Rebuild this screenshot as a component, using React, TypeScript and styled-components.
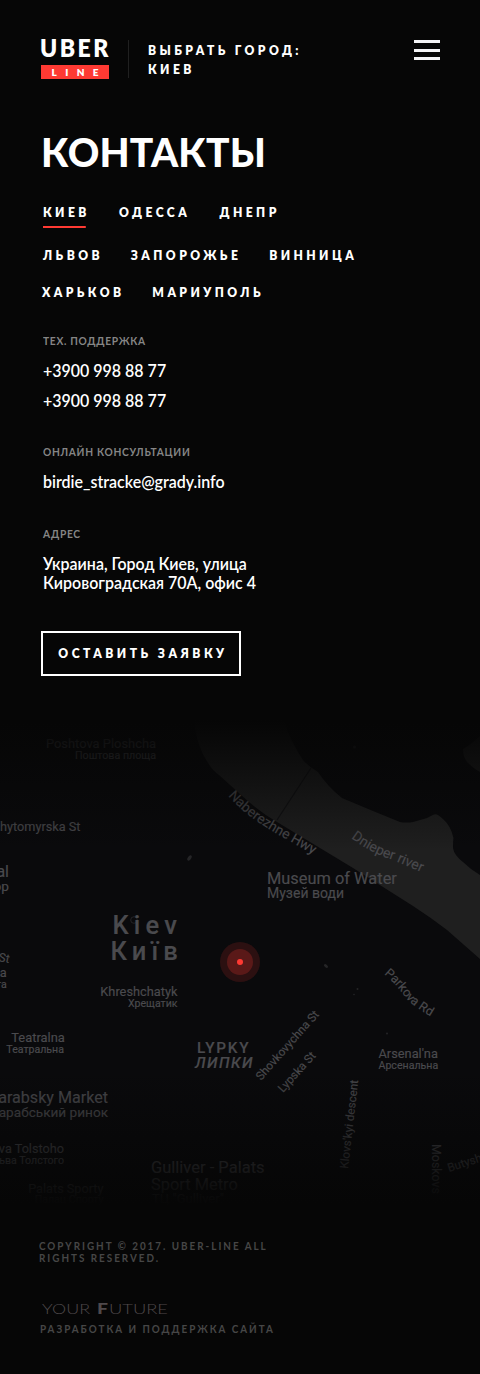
import React from 'react';
import styled, { createGlobalStyle } from 'styled-components';

const GlobalStyle = createGlobalStyle`
  *, *::before, *::after { box-sizing: border-box; }
  body {
    margin: 0;
    background: #060606;
    color: #fff;
    font-family: Lato, "Open Sans", sans-serif;
  }
  a { color: inherit; text-decoration: none; }
`;

const Page = styled.div`
  width: 480px;
  min-height: 1374px;
  background: #060606;
`;

const Header = styled.header`
  display: flex;
  align-items: flex-start;
  height: 80px;
  padding: 38px 40px 0 41px;
`;

const Logo = styled.a`
  display: block;
  width: 68px;
`;

const LogoName = styled.span`
  display: block;
  margin-left: -1px;
  height: 27px;
  font-size: 25px;
  line-height: 19px;
  font-weight: 800;
  letter-spacing: 2.7px;
  white-space: nowrap;
  transform: scaleX(0.92);
  transform-origin: left;
`;

const LogoTag = styled.span`
  display: block;
  height: 14px;
  padding-left: 10.5px;
  background: #ff3a33;
  font-size: 10px;
  line-height: 14px;
  font-weight: 800;
  letter-spacing: 8.4px;
  white-space: nowrap;
  overflow: hidden;
`;

const Divider = styled.div`
  width: 1px;
  height: 38px;
  margin: 2px 19px 0 19px;
  background: #202020;
`;

const CityPicker = styled.div`
  flex: 1;
  padding-top: 3px;
  font-size: 13px;
  line-height: 19px;
  font-weight: 800;
  letter-spacing: 3.65px;
  white-space: nowrap;
  transform: scaleX(0.93);
  transform-origin: left;
`;

const MenuButton = styled.button`
  display: flex;
  flex-direction: column;
  justify-content: space-between;
  width: 26px;
  height: 20px;
  margin: 2px 0 0;
  padding: 0;
  border: 0;
  background: none;
`;

const MenuBar = styled.span`
  height: 3px;
  background: #f4f4f6;
`;

const Content = styled.main`
  padding: 52px 40px 0 41px;
`;

const Title = styled.h1`
  margin: 0;
  padding-top: 1px;
  font-size: 40px;
  line-height: 39px;
  font-weight: 900;
  letter-spacing: 0.2px;
  transform: scaleX(0.975);
  transform-origin: left;
`;

const Cities = styled.nav`
  display: flex;
  flex-direction: column;
  margin-top: 31px;
`;

const CityRow = styled.div<{ $height: number; $gap: number; $shift?: number }>`
  display: flex;
  gap: ${(p) => p.$gap}px;
  height: ${(p) => p.$height}px;
  margin-left: ${(p) => p.$shift ?? 2}px;
  transform: scaleX(0.93);
  transform-origin: left;
`;

const City = styled.a<{ $active?: boolean }>`
  height: 25px;
  font-size: 13px;
  line-height: 19px;
  font-weight: 800;
  letter-spacing: 3.68px;
  white-space: nowrap;

  &::after {
    content: "";
    display: ${(p) => (p.$active ? 'block' : 'none')};
    width: 46.2px;
    height: 2px;
    margin-top: 4px;
    background: #ff3a33;
  }
`;

const Contact = styled.section<{ $height: number }>`
  height: ${(p) => p.$height}px;
  padding-left: 2px;
`;

const ContactLabel = styled.h2`
  margin: 0 0 14px;
  font-size: 11px;
  line-height: 12px;
  font-weight: 700;
  letter-spacing: 0.75px;
  color: #858585;
  transform: scaleX(0.93);
  transform-origin: left;
`;

const ContactValue = styled.p`
  margin: 0 0 11px;
  font-size: 17px;
  line-height: 19px;
  font-weight: 600;
  white-space: nowrap;
  transform: scaleX(0.94);
  transform-origin: left;
`;

const RequestButton = styled.button`
  display: flex;
  align-items: center;
  justify-content: center;
  width: 200px;
  height: 45px;
  padding: 0 0 0 3px;
  border: 2px solid #fff;
  background: transparent;
  color: #fff;
`;

const RequestLabel = styled.span`
  font: 800 13px/19px Lato, sans-serif;
  letter-spacing: 3.75px;
  white-space: nowrap;
  transform: scaleX(0.93);
`;

const MapPanel = styled.section`
  height: 500px;
  margin-top: 44px;
`;

const MapDrawing = styled.svg`
  display: block;
  font-family: Roboto, sans-serif;
`;

const Footer = styled.footer`
  padding: 20px 40px 0 39px;
  color: #464646;
`;

const FooterText = styled.p<{ $shift?: number }>`
  width: 240px;
  margin: 0 0 0 ${(p) => p.$shift ?? 0}px;
  font-size: 10.5px;
  line-height: 12px;
  font-weight: 700;
  letter-spacing: 2.12px;
  white-space: nowrap;
  transform: scaleX(0.94);
  transform-origin: left;
`;

const StudioLogo = styled.svg`
  display: block;
  margin: 36px 0 7px 2px;
`;

type Anchor = 'start' | 'end';
interface PlaceProps {
  x: number;
  y: number;
  size: number;
  anchor?: Anchor;
  weight?: number;
  spacing?: number;
  italic?: boolean;
  children: string;
}

const Place = ({ x, y, size, anchor = 'start', weight = 400, spacing = 0, italic, children }: PlaceProps) => (
  <text
    x={x}
    y={y}
    fontSize={size}
    textAnchor={anchor}
    fontWeight={weight}
    letterSpacing={spacing}
    fontStyle={italic ? 'italic' : 'normal'}
  >
    {children}
  </text>
);

const streets = [
  { id: 'naberezhne', d: 'M228 796 Q245 815 272 831 L330 864', size: 13.8, name: 'Naberezhne Hwy' },
  { id: 'dnieper', d: 'M351 838 Q371 853 393 860 L440 880', size: 14, name: 'Dnieper river' },
  { id: 'parkova', d: 'M384 974 Q396 984 406 998 Q412 1006 440 1022', size: 12.6, name: 'Parkova Rd' },
  { id: 'shovkovychna', d: 'M261 1081 L331 1002', size: 11.7, name: 'Shovkovychna St' },
  { id: 'lypska', d: 'M283 1093 L330 1041', size: 11.7, name: 'Lypska St' },
  { id: 'klovskyi', d: 'M348 1169 L359.5 1070', size: 11.7, name: "Klovs'kyi descent" },
  { id: 'moskovska', d: 'M432 1144 L432 1240', size: 12.4, name: 'Moskovs' },
  { id: 'butysheva', d: 'M449 1172 L520 1149', size: 11.6, name: 'Butysh' },
  { id: 'west', d: 'M-2 961 L30 967', size: 12, name: 'St' },
];

const CityMap = () => (
  <MapDrawing width="480" height="500" viewBox="0 720 480 500">
    <defs>
      <linearGradient id="fadeTop" x1="0" y1="720" x2="0" y2="850" gradientUnits="userSpaceOnUse">
        <stop offset="0" stopColor="#060606" />
        <stop offset="0.1" stopColor="#060606" stopOpacity="0.92" />
        <stop offset="1" stopColor="#060606" stopOpacity="0" />
      </linearGradient>
      <linearGradient id="fadeBottom" x1="0" y1="1070" x2="0" y2="1205" gradientUnits="userSpaceOnUse">
        <stop offset="0" stopColor="#060606" stopOpacity="0" />
        <stop offset="1" stopColor="#060606" />
      </linearGradient>
    </defs>
    <rect y="720" width="480" height="500" fill="#0a0a0c" />
    <path
      fill="#1f1f1f"
      d="M194 720 Q196 745 208 763 Q213 771 219 775 L240 794 Q258 811 277 822 L353 868 L413 906 Q430 917 447 930 L480 959 V875 Q470 869 463 862 Q454 855 453 848 Q453 841 453.500 838 Q451 826 443 819 Q437 813 434 814.500 Q430 816 427 818 L413 822 Q406 823 400 822 L373 811 L342 798 Q328 787 318 772 Q308 766 303 760 Q295 748 288 732 L284 720 Z"
    />
    <path fill="#1f1f1f" d="M480 736 Q474 742 463 749 Q463 757 467 762 Q474 769 480 772 Z" />
    <path stroke="#111113" strokeWidth="1.200" d="M311 768 L277 820" />
    <g fill="#252527">
      <ellipse cx="189.500" cy="858" rx="1.700" ry="3" transform="rotate(35 189.500 858)" />
      <ellipse cx="326" cy="966" rx="1.400" ry="2.400" transform="rotate(-50 326 966)" />
      <circle cx="354.500" cy="747" r="1.500" />
      <circle cx="357.500" cy="989" r="1" />
      <circle cx="354" cy="994.500" r="0.800" />
      <circle cx="387" cy="1033.500" r="1" />
    </g>
    <circle cx="134" cy="920" r="3.300" fill="none" stroke="#2a2a2c" strokeWidth="0.800" />

    <g fill="#4a4a4e" stroke="#4a4a4e" strokeWidth="0.150">
      <Place x={156} y={747.5} size={12.9} anchor="end">Poshtova Ploshcha</Place>
      <Place x={156} y={758.5} size={10.7} anchor="end">Поштова площа</Place>
      <Place x={0} y={830.5} size={12.7}>hytomyrska St</Place>
      <Place x={9} y={876.5} size={16} anchor="end">al</Place>
      <Place x={9} y={891} size={13.7} anchor="end">ор</Place>
      <Place x={112.5} y={933.5} size={25.5} weight={500} spacing={5.2}>Kiev</Place>
      <Place x={110.5} y={959.5} size={25.5} weight={500} spacing={5.1}>Київ</Place>
      <Place x={267} y={883.5} size={16.4}>Museum of Water</Place>
      <Place x={267} y={898} size={14}>Музей води</Place>
      <Place x={177.5} y={996} size={12.8} anchor="end">Khreshchatyk</Place>
      <Place x={177.5} y={1007} size={10.6} anchor="end">Хрещатик</Place>
      <Place x={6.7} y={977} size={12.7} anchor="end">a</Place>
      <Place x={6.7} y={988} size={10.6} anchor="end">та</Place>
      <Place x={64.8} y={1041.5} size={12.9} anchor="end">Teatralna</Place>
      <Place x={64} y={1053} size={10.6} anchor="end">Театральна</Place>
      <Place x={197} y={1053.3} size={15.3} weight={500} spacing={1.8}>LYPKY</Place>
      <Place x={195} y={1068} size={15.3} weight={500} spacing={1.5} italic>ЛИПКИ</Place>
      <Place x={108} y={1103} size={16.1} anchor="end">arabsky Market</Place>
      <Place x={108} y={1117} size={13.6} anchor="end">арабський ринок</Place>
      <Place x={64} y={1153} size={12.7} anchor="end">va Tolstoho</Place>
      <Place x={64} y={1164} size={10.6} anchor="end">ьва Толстого</Place>
      <Place x={151} y={1173.3} size={16.5}>Gulliver - Palats</Place>
      <Place x={151} y={1190} size={16.4}>Sport Metro</Place>
      <Place x={152} y={1203} size={13}>ТЦ "Gulliver"</Place>
      <Place x={103.5} y={1192.5} size={12.7} anchor="end">Palats Sporty</Place>
      <Place x={103.5} y={1203} size={10.6} anchor="end">Палац Спорту</Place>
      <Place x={378.5} y={1058} size={12.8}>Arsenal'na</Place>
      <Place x={378.5} y={1069} size={10.6}>Арсенальна</Place>
      {streets.map((s) => (
        <React.Fragment key={s.id}>
          <path id={s.id} d={s.d} fill="none" stroke="none" />
          <text fontSize={s.size}>
            <textPath href={`#${s.id}`}>{s.name}</textPath>
          </text>
        </React.Fragment>
      ))}
    </g>

    <rect y="720" width="480" height="160" fill="url(#fadeTop)" />
    <rect y="1050" width="480" height="170" fill="url(#fadeBottom)" />

    <circle cx="240" cy="962" r="20" fill="#ff3a33" fillOpacity="0.14" />
    <circle cx="240" cy="962" r="13" fill="#ff3a33" fillOpacity="0.22" />
    <circle cx="240" cy="962" r="3" fill="#ff3a33" />
  </MapDrawing>
);

const contacts = [
  { label: 'ТЕХ. ПОДДЕРЖКА', values: ['+3900 998 88 77', '+3900 998 88 77'], height: 111 },
  { label: 'ОНЛАЙН КОНСУЛЬТАЦИИ', values: ['birdie_stracke@grady.info'], height: 82 },
];

export default function App() {
  return (
    <Page>
      <GlobalStyle />
      <Header>
        <Logo href="#">
          <LogoName>UBER</LogoName>
          <LogoTag>LINE</LogoTag>
        </Logo>
        <Divider />
        <CityPicker>
          ВЫБРАТЬ ГОРОД:
          <br />
          КИЕВ
        </CityPicker>
        <MenuButton aria-label="Меню">
          <MenuBar />
          <MenuBar />
          <MenuBar />
        </MenuButton>
      </Header>

      <Content>
        <Title>КОНТАКТЫ</Title>
        <Cities>
          <CityRow $height={43} $gap={31.5}>
            <City $active>КИЕВ</City>
            <City>ОДЕССА</City>
            <City>ДНЕПР</City>
          </CityRow>
          <CityRow $height={37} $gap={30}>
            <City>ЛЬВОВ</City>
            <City>ЗАПОРОЖЬЕ</City>
            <City>ВИННИЦА</City>
          </CityRow>
          <CityRow $height={52} $gap={30} $shift={1}>
            <City>ХАРЬКОВ</City>
            <City>МАРИУПОЛЬ</City>
          </CityRow>
        </Cities>

        {contacts.map((c) => (
          <Contact key={c.label} $height={c.height}>
            <ContactLabel>{c.label}</ContactLabel>
            {c.values.map((v, i) => (
              <ContactValue key={i}>{v}</ContactValue>
            ))}
          </Contact>
        ))}
        <Contact $height={103}>
          <ContactLabel>АДРЕС</ContactLabel>
          <ContactValue>
            Украина, Город Киев, улица
            <br />
            Кировоградская 70А, офис 4
          </ContactValue>
        </Contact>

        <RequestButton>
          <RequestLabel>ОСТАВИТЬ ЗАЯВКУ</RequestLabel>
        </RequestButton>
      </Content>

      <MapPanel>
        <CityMap />
      </MapPanel>

      <Footer>
        <FooterText>
          COPYRIGHT © 2017. UBER-LINE ALL
          <br />
          RIGHTS RESERVED.
        </FooterText>
        <StudioLogo width="128" height="16" viewBox="0 0 128 16" fill="#4f494b" fontFamily="Lato, sans-serif">
          <text x="1" y="13.500" fontSize="14.400" fontWeight="300" textLength="48" lengthAdjust="spacingAndGlyphs">YOUR</text>
          <text x="56" y="13.500" fontSize="14.400" fontWeight="900" textLength="11" lengthAdjust="spacingAndGlyphs">F</text>
          <text x="68" y="13.500" fontSize="14.400" fontWeight="300" textLength="59" lengthAdjust="spacingAndGlyphs">UTURE</text>
        </StudioLogo>
        <FooterText $shift={1}>РАЗРАБОТКА И ПОДДЕРЖКА САЙТА</FooterText>
      </Footer>
    </Page>
  );
}
